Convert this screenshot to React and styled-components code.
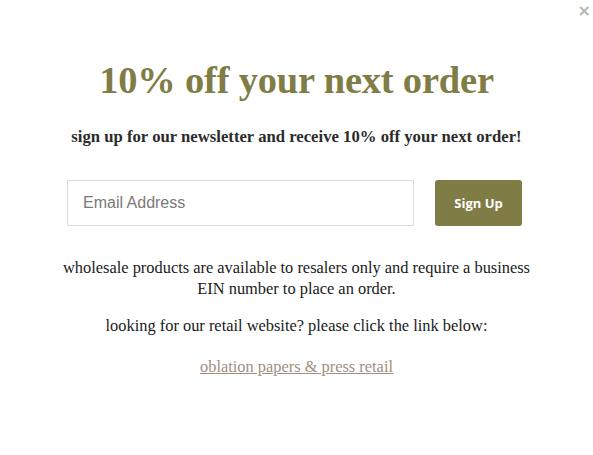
import React from "react"
import styled, { createGlobalStyle } from "styled-components"

const Global = createGlobalStyle`
  html, body {
    margin: 0;
    padding: 0;
    background: #fff;
  }
`

const Modal = styled.div`
  position: relative;
  width: 593px;
  height: 455px;
  box-sizing: border-box;
  padding-top: 57px;
  display: flex;
  flex-direction: column;
  align-items: center;
  font-family: "Liberation Serif", "Times New Roman", serif;
  color: #222;
`

const Close = styled.button`
  position: absolute;
  top: 1px;
  right: 2px;
  border: 0;
  background: none;
  padding: 0;
  font-family: "DejaVu Sans", sans-serif;
  font-size: 16px;
  font-weight: bold;
  color: #b4b4b4;
  cursor: pointer;
`

const Title = styled.h1`
  margin: 0;
  font-size: 38.5px;
  font-weight: bold;
  line-height: 46px;
  color: #7f7d45;
  letter-spacing: -0.2px;
`

const Subtitle = styled.p`
  margin: 24px 0 0;
  font-size: 16.7px;
  font-weight: bold;
  line-height: 20px;
  color: #2b2b2b;
`

const Form = styled.form`
  margin: 33px 4px 0 0;
  display: flex;
  gap: 21px;
  align-items: stretch;
`

const Input = styled.input`
  width: 347px;
  height: 46px;
  box-sizing: border-box;
  border: 1px solid #dcdcdc;
  padding: 0 15px;
  font-family: "Liberation Sans", Arial, sans-serif;
  font-size: 16px;
  color: #333;
  outline: none;
  &::placeholder {
    color: #7a7a7a;
  }
`

const Button = styled.button`
  width: 87px;
  height: 46px;
  border: 0;
  border-radius: 3px;
  background: #7f7d45;
  color: #fff;
  font-family: "Open Sans", sans-serif;
  font-size: 13px;
  font-weight: bold;
  cursor: pointer;
`

const Text = styled.p`
  margin: ${p => p.$top}px 0 0;
  width: 480px;
  text-align: center;
  font-size: 16.4px;
  line-height: 21px;
  color: #1a1a1a;
`

const Link = styled.a`
  margin-top: 20px;
  font-size: 16.4px;
  line-height: 21px;
  color: #a08f80;
  text-decoration: underline;
`

export default function App() {
  return (
    <>
      <Global />
      <Modal>
        <Close aria-label="close">×</Close>
        <Title>10% off your next order</Title>
        <Subtitle>sign up for our newsletter and receive 10% off your next order!</Subtitle>
        <Form onSubmit={e => e.preventDefault()}>
          <Input type="email" placeholder="Email Address" />
          <Button type="submit">Sign Up</Button>
        </Form>
        <Text $top={31}>
          wholesale products are available to resalers only and require a business EIN number to place an order.
        </Text>
        <Text $top={16}>looking for our retail website? please click the link below:</Text>
        <Link href="#">oblation papers &amp; press retail</Link>
      </Modal>
    </>
  )
}
